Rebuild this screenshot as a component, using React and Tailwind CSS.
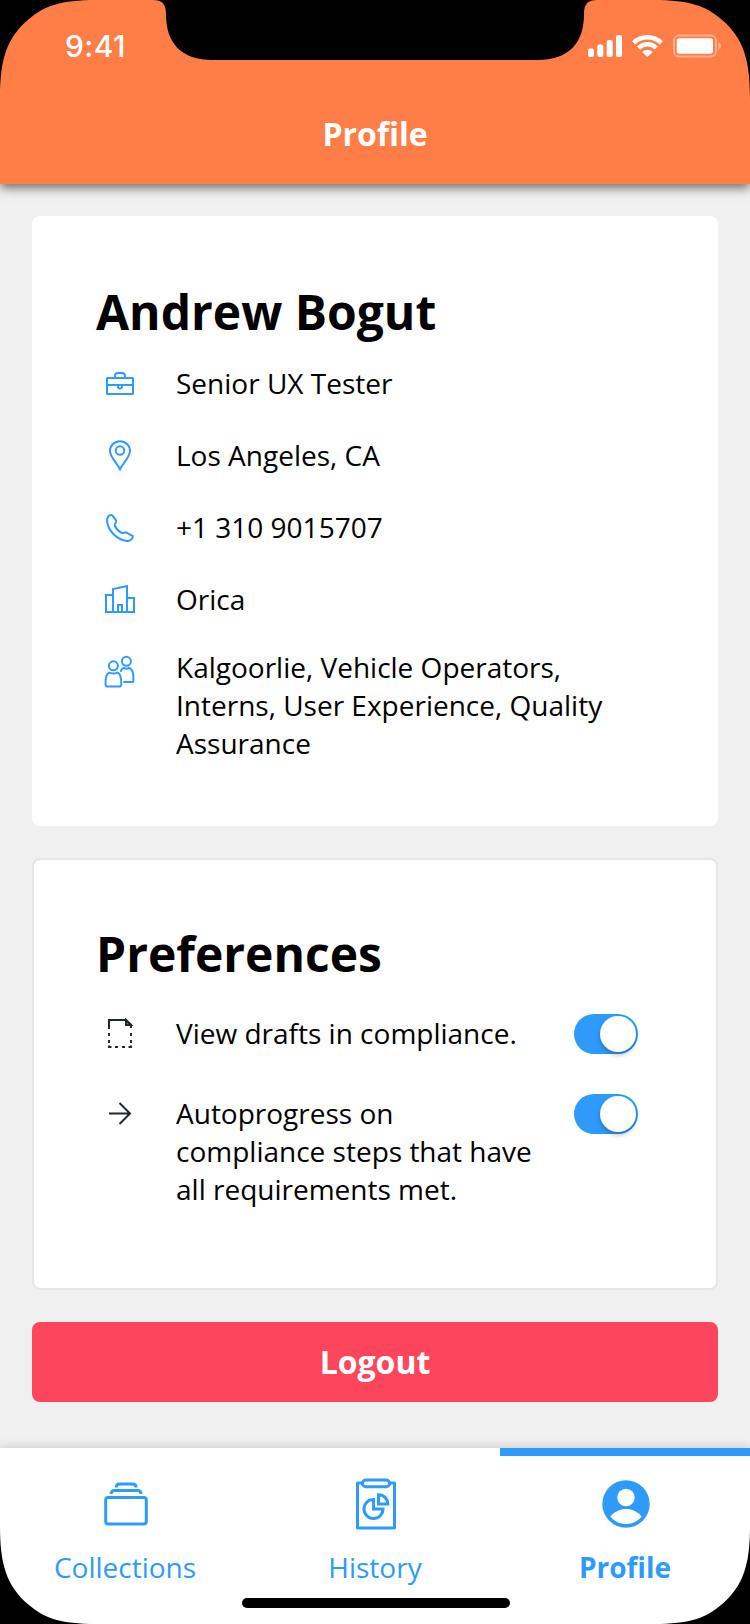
const blue = "#2e9bfb";

function StatusBar() {
  return (
    <div className="flex h-[92px] items-end justify-between pl-[65px] pr-[28px]">
      <span className="mb-[26px] font-['Inter'] text-[30px] font-medium leading-[40px] tracking-[0.4px] text-white">9:41</span>
      <svg className="mb-[34px]" width="134" height="24" viewBox="588 34 134 24" fill="#fff">
        <rect x="588" y="48.5" width="6" height="8.5" rx="2" />
        <rect x="597.3" y="44.5" width="6" height="12.5" rx="2" />
        <rect x="606.7" y="40" width="6" height="17" rx="2" />
        <rect x="616" y="35" width="6" height="22" rx="2" />
        <path d="M632 41.300a21.800 21.800 0 0 1 30.800 0l-3.200 3.200a17.300 17.300 0 0 0-24.400 0z" />
        <path d="M637 46.400a14.700 14.700 0 0 1 20.800 0l-3.200 3.200a10.200 10.200 0 0 0-14.400 0z" />
        <path d="M642.200 52a7.400 7.400 0 0 1 10.400 0l-5.200 5z" />
        <rect x="674" y="35.5" width="42" height="21" rx="5" fill="none" stroke="#fff" strokeOpacity=".38" strokeWidth="2" />
        <rect x="676.7" y="38.300" width="36.3" height="15.400" rx="2.6" />
        <path d="M718.5 42v8c3.2-1.6 3.2-6.4 0-8z" opacity=".45" />
      </svg>
    </div>
  );
}

function Icon({ name, color = blue }) {
  const shapes = {
    briefcase: (
      <>
        <rect x="107" y="378" width="26" height="16" rx=".5" />
        <path d="M115 378v-2q0-3 3-3h4q3 0 3 3v2M107 385h26M118 385v1.5a2 2 0 0 0 4 0V385" />
      </>
    ),
    pin: (
      <>
        <path d="M120 469.2c-2.6-5.5-10-12-10-18.2a10 9.8 0 0 1 20 0c0 6.200-7.400 12.700-10 18.200z" />
        <circle cx="120" cy="450.500" r="4.200" />
      </>
    ),
    phone: (
      <path d="M112 515.200C108.500 514.500 106.500 518 107.200 522C108.500 531 117 540.200 127 541C130.500 541.200 133 538.500 132.900 536L126 532.300L123.500 532.800C123 533.500 122 533 121 532.500C118 531 116 528.500 114.700 525.500C114.300 524.500 115 523.500 116 522.300C116.500 521 116 520 115.500 519.500Z" />
    ),
    building: (
      <path d="M113 595h-7v17h28v-14h-7M113 612v-23l14-3v26M118 612v-7h4v7" />
    ),
    people: (
      <>
        <circle cx="113.400" cy="665.800" r="4.500" />
        <circle cx="126.400" cy="661.300" r="4.500" />
        <path d="M109.500 672.600q3.800 2 7.800 0c3 .6 4 6.500 4 11.400q0 2.400-1.500 2.400h-12.800q-1.500 0-1.500-2.400c0-4.900 1-10.800 4-11.400zM120.800 671.800q.7-3.600 2.700-3.900q2.800 1.800 5.700 0c3 .6 4.300 6.500 4.300 11.500q0 2.600-1.300 2.600h-8.800" />
      </>
    ),
    draft: (
      <>
        <path d="M109 1029v-9h17l5 5v3" />
        <path d="M126 1020v5h5z" fill={color} fillOpacity=".5" />
        <path d="M109 1033v3m0 4v3m0 2.500v1.500h2.500M115 1047h3m4 0h3m3.500 0h2.500v-1.500m0-12.500v3m0 4v3" />
      </>
    ),
    arrow: <path d="M109 1113.500h21M119.500 1103l10.500 10.500l-10.500 10.500" />,
  };
  const boxes = {
    briefcase: "104 368 32 32",
    pin: "104 440 32 32",
    phone: "104 512 32 32",
    building: "104 584 32 32",
    people: "104 656 32 32",
    draft: "104 1018 32 32",
    arrow: "104 1098 32 32",
  };
  return (
    <svg className="shrink-0 overflow-visible" width="32" height="32" viewBox={boxes[name]} fill="none" stroke={color} strokeWidth="2">
      {shapes[name]}
    </svg>
  );
}

function InfoRow({ icon, children }) {
  return (
    <li className="flex h-[72px] items-center gap-10">
      <Icon name={icon} />
      <span className="pb-[2px]">{children}</span>
    </li>
  );
}

function Toggle() {
  return (
    <div role="switch" aria-checked="true" className="flex h-10 w-16 shrink-0 items-center justify-end rounded-full bg-[#2e9bfb] pr-[2px]">
      <span className="h-9 w-9 rounded-full bg-white shadow-[0_3px_4px_rgba(0,0,0,0.25)]" />
    </div>
  );
}

export default function App() {
  return (
    <div className="relative flex h-[1624px] w-[750px] flex-col overflow-hidden bg-[#f0f0f0] font-['Open_Sans','Noto_Sans',sans-serif] text-[28px] leading-[38px] text-black">
      <header className="z-10 h-[184px] shrink-0 bg-[#ff7e47] shadow-[0_4px_10px_rgba(0,0,0,0.55)]">
        <StatusBar />
        <h1 className="pt-5 text-center text-[32px] font-bold leading-[44px] text-white">Profile</h1>
      </header>

      <main className="flex flex-1 flex-col gap-8 px-8 pt-8">
        <section className="h-[610px] rounded-[8px] bg-white px-16 pt-[63px]">
          <h2 className="text-[48px] font-bold leading-[66px]">Andrew Bogut</h2>
          <ul className="pl-2 pt-[3px]">
            <InfoRow icon="briefcase">Senior UX Tester</InfoRow>
            <InfoRow icon="pin">Los Angeles, CA</InfoRow>
            <InfoRow icon="phone">+1 310 9015707</InfoRow>
            <InfoRow icon="building">Orica</InfoRow>
            <li className="flex gap-10 pt-3">
              <span className="pt-2"><Icon name="people" /></span>
              <p className="w-[450px]">Kalgoorlie, Vehicle Operators, Interns, User Experience, Quality Assurance</p>
            </li>
          </ul>
        </section>

        <section className="h-[432px] rounded-[8px] border-2 border-[#e5e5e5] bg-white px-[62px] pt-[61px]">
          <h2 className="text-[48px] font-bold leading-[66px]">Preferences</h2>
          <div className="flex flex-col gap-10 pl-2 pt-[27px]">
            <div className="flex items-start">
              <span className="mr-10 pt-1"><Icon name="draft" color="#1e282d" /></span>
              <p className="mr-8 w-[366px]">View drafts in compliance.</p>
              <Toggle />
            </div>
            <div className="flex items-start">
              <span className="mr-10 pt-1"><Icon name="arrow" color="#1e282d" /></span>
              <p className="mr-8 w-[366px]">Autoprogress on compliance steps that have all requirements met.</p>
              <Toggle />
            </div>
          </div>
        </section>

        <button className="h-20 w-full rounded-[8px] bg-[#fd465c] text-[32px] font-bold leading-[44px] text-white">Logout</button>
      </main>

      <nav className="z-10 grid h-[176px] shrink-0 grid-cols-3 bg-white text-center text-[#2e9bfb] shadow-[0_0_10px_rgba(0,0,0,0.2)]">
        <a className="flex flex-col items-center pt-6">
          <svg width="64" height="64" viewBox="93 1472 64 64" fill="none" stroke={blue} strokeWidth="3">
            <rect x="105.700" y="1497.500" width="40.600" height="26.500" rx="2.500" />
            <path d="M111 1494q.5-3.500 3.500-3.500h23q3.500 0 3.500 3.500M116 1487.500q.5-3.500 3.500-3.500h13q3.500 0 3.500 3.500" />
          </svg>
          <span className="pt-3">Collections</span>
        </a>
        <a className="flex flex-col items-center pt-6">
          <svg width="64" height="64" viewBox="343 1472 64 64" fill="none" stroke={blue} strokeWidth="3">
            <path d="M363 1483h-5.500v45h37v-45h-5.500" strokeLinejoin="round" />
            <rect x="362.500" y="1480" width="27" height="6.800" rx="3.400" />
            <path d="M373.500 1499.500a9.500 9.500 0 1 0 9.500 9.500h-9.500zM378.500 1494.700v9.300h9.300a9.300 9.300 0 0 0-9.300-9.300z" />
          </svg>
          <span className="pt-3">History</span>
        </a>
        <a className="flex flex-col items-center border-t-8 border-[#2e9bfb] pt-4 font-bold">
          <svg width="64" height="64" viewBox="593 1472 64 64">
            <circle cx="626" cy="1504" r="23.700" fill={blue} />
            <circle cx="626" cy="1497.500" r="8.700" fill="#fff" />
            <path d="M610.300 1516.500c8-10 23.400-10 31.400 0c-8 10-23.400 10-31.400 0z" fill="#fff" />
          </svg>
          <span className="pt-3">Profile</span>
        </a>
      </nav>

      <div className="absolute bottom-4 left-[242px] z-20 h-[10px] w-[268px] rounded-full bg-black" />
      <svg className="pointer-events-none absolute inset-0 z-30" width="750" height="1624" viewBox="0 0 750 1624">
        <path d="M0 0H96C61 0 44 6 29 19C6 38 0 61 0 98zM750 0H654C689 0 706 6 721 19C744 38 750 61 750 98z" />
        <path d="M153 0C162 0 166 4 166 14C166 43 181 60 213 60H537C569 60 584 43 584 14C584 4 588 0 597 0z" />
        <path d="M0 1624H96C61 1624 44 1618 29 1605C6 1586 0 1563 0 1526zM750 1624H654C689 1624 706 1618 721 1605C744 1586 750 1563 750 1526z" />
      </svg>
    </div>
  );
}
